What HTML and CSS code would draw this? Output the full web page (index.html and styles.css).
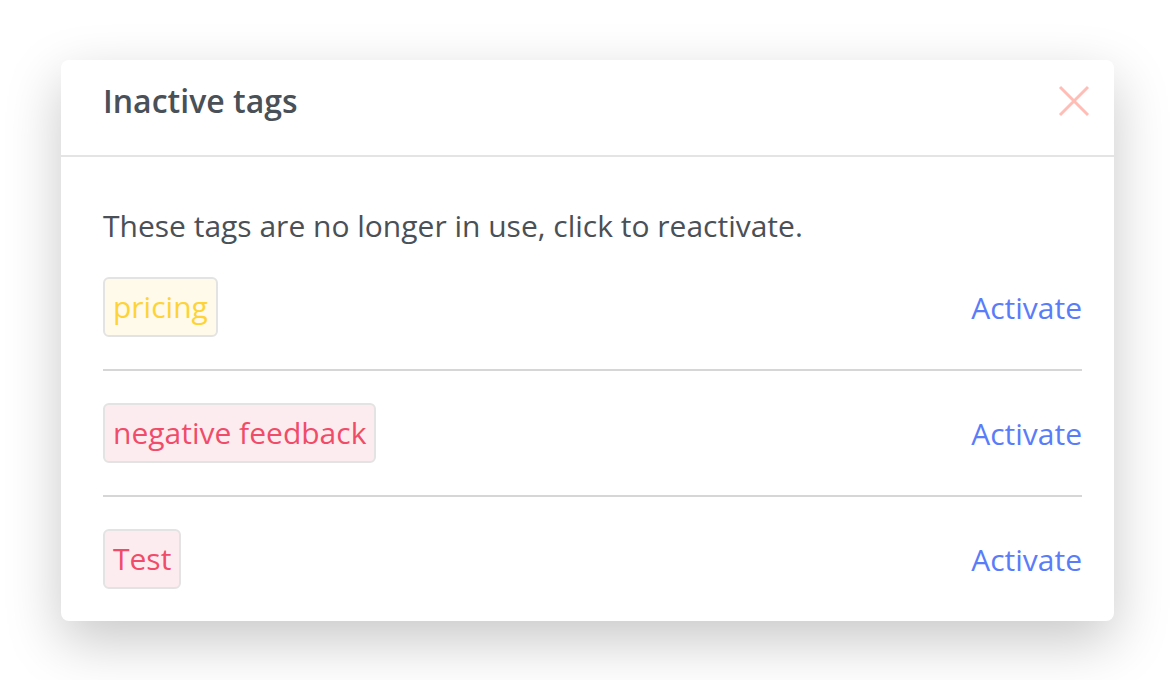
FILE: index.html
```html
<!DOCTYPE html>
<html lang="en">
<head>
  <meta charset="UTF-8">
  <title>Inactive tags</title>
  <link rel="stylesheet" href="styles.css">
</head>
<body>

  <div class="modal">
    <div class="modal-header">
      <h2>Inactive tags</h2>
      <button class="close" aria-label="Close">
        <svg width="32" height="32" viewBox="0 0 32 32">
          <path d="M2 2 L30 30 M30 2 L2 30" stroke="#ffbdb6" stroke-width="3" fill="none"/>
        </svg>
      </button>
    </div>

    <div class="modal-body">
      <p>These tags are no longer in use, click to reactivate.</p>

      <div class="tag-row">
        <span class="tag yellow">pricing</span>
        <a href="#" class="activate">Activate</a>
      </div>
      <div class="tag-row">
        <span class="tag red">negative feedback</span>
        <a href="#" class="activate">Activate</a>
      </div>
      <div class="tag-row">
        <span class="tag red">Test</span>
        <a href="#" class="activate">Activate</a>
      </div>
    </div>
  </div>

</body>
</html>
```

FILE: styles.css
```css
body {
  font-family: "Open Sans", Arial, sans-serif;
  background-color: #fff;
  margin: 0;
  padding: 60px 61px;
  color: #4a5056;
}

.modal {
  width: 1053px;
  background: white;
  border-radius: 8px;
  box-shadow: 0 20px 55px rgba(0, 0, 0, 0.22);
}

.modal-header {
  display: flex;
  align-items: center;
  justify-content: space-between;
  height: 95px;
  padding: 0 24px 0 42px;
  border-bottom: 2px solid #e4e4e4;
}

.modal-header h2 {
  margin: 0 0 14px;
  font-size: 32px;
  font-weight: 600;
  color: #495057;
}

.close {
  background: none;
  border: 0;
  padding: 0;
  margin-bottom: 14px;
  width: 32px;
  height: 32px;
  cursor: pointer;
}

.modal-body {
  padding: 49px 32px 32px 42px;
}

.modal-body p {
  margin: 0 0 31px;
  font-size: 30px;
  line-height: 40px;
}

.tag-row {
  display: flex;
  align-items: center;
  justify-content: space-between;
  padding: 32px 0;
  border-bottom: 2px solid #d6d6d6;
}

.tag-row:first-of-type {
  padding-top: 0;
}

.tag-row:last-child {
  border-bottom: 0;
  padding-bottom: 0;
}

.tag {
  display: inline-block;
  font-size: 30px;
  line-height: 56px;
  padding: 0 8px;
  border: 2px solid #e3e3e3;
  border-radius: 6px;
}

.tag.yellow {
  background: #fffaea;
  color: #fdd338;
}

.tag.red {
  background: #fdecef;
  color: #f04c6a;
}

.activate {
  font-size: 30px;
  color: #5a7cf9;
  text-decoration: none;
}
```
